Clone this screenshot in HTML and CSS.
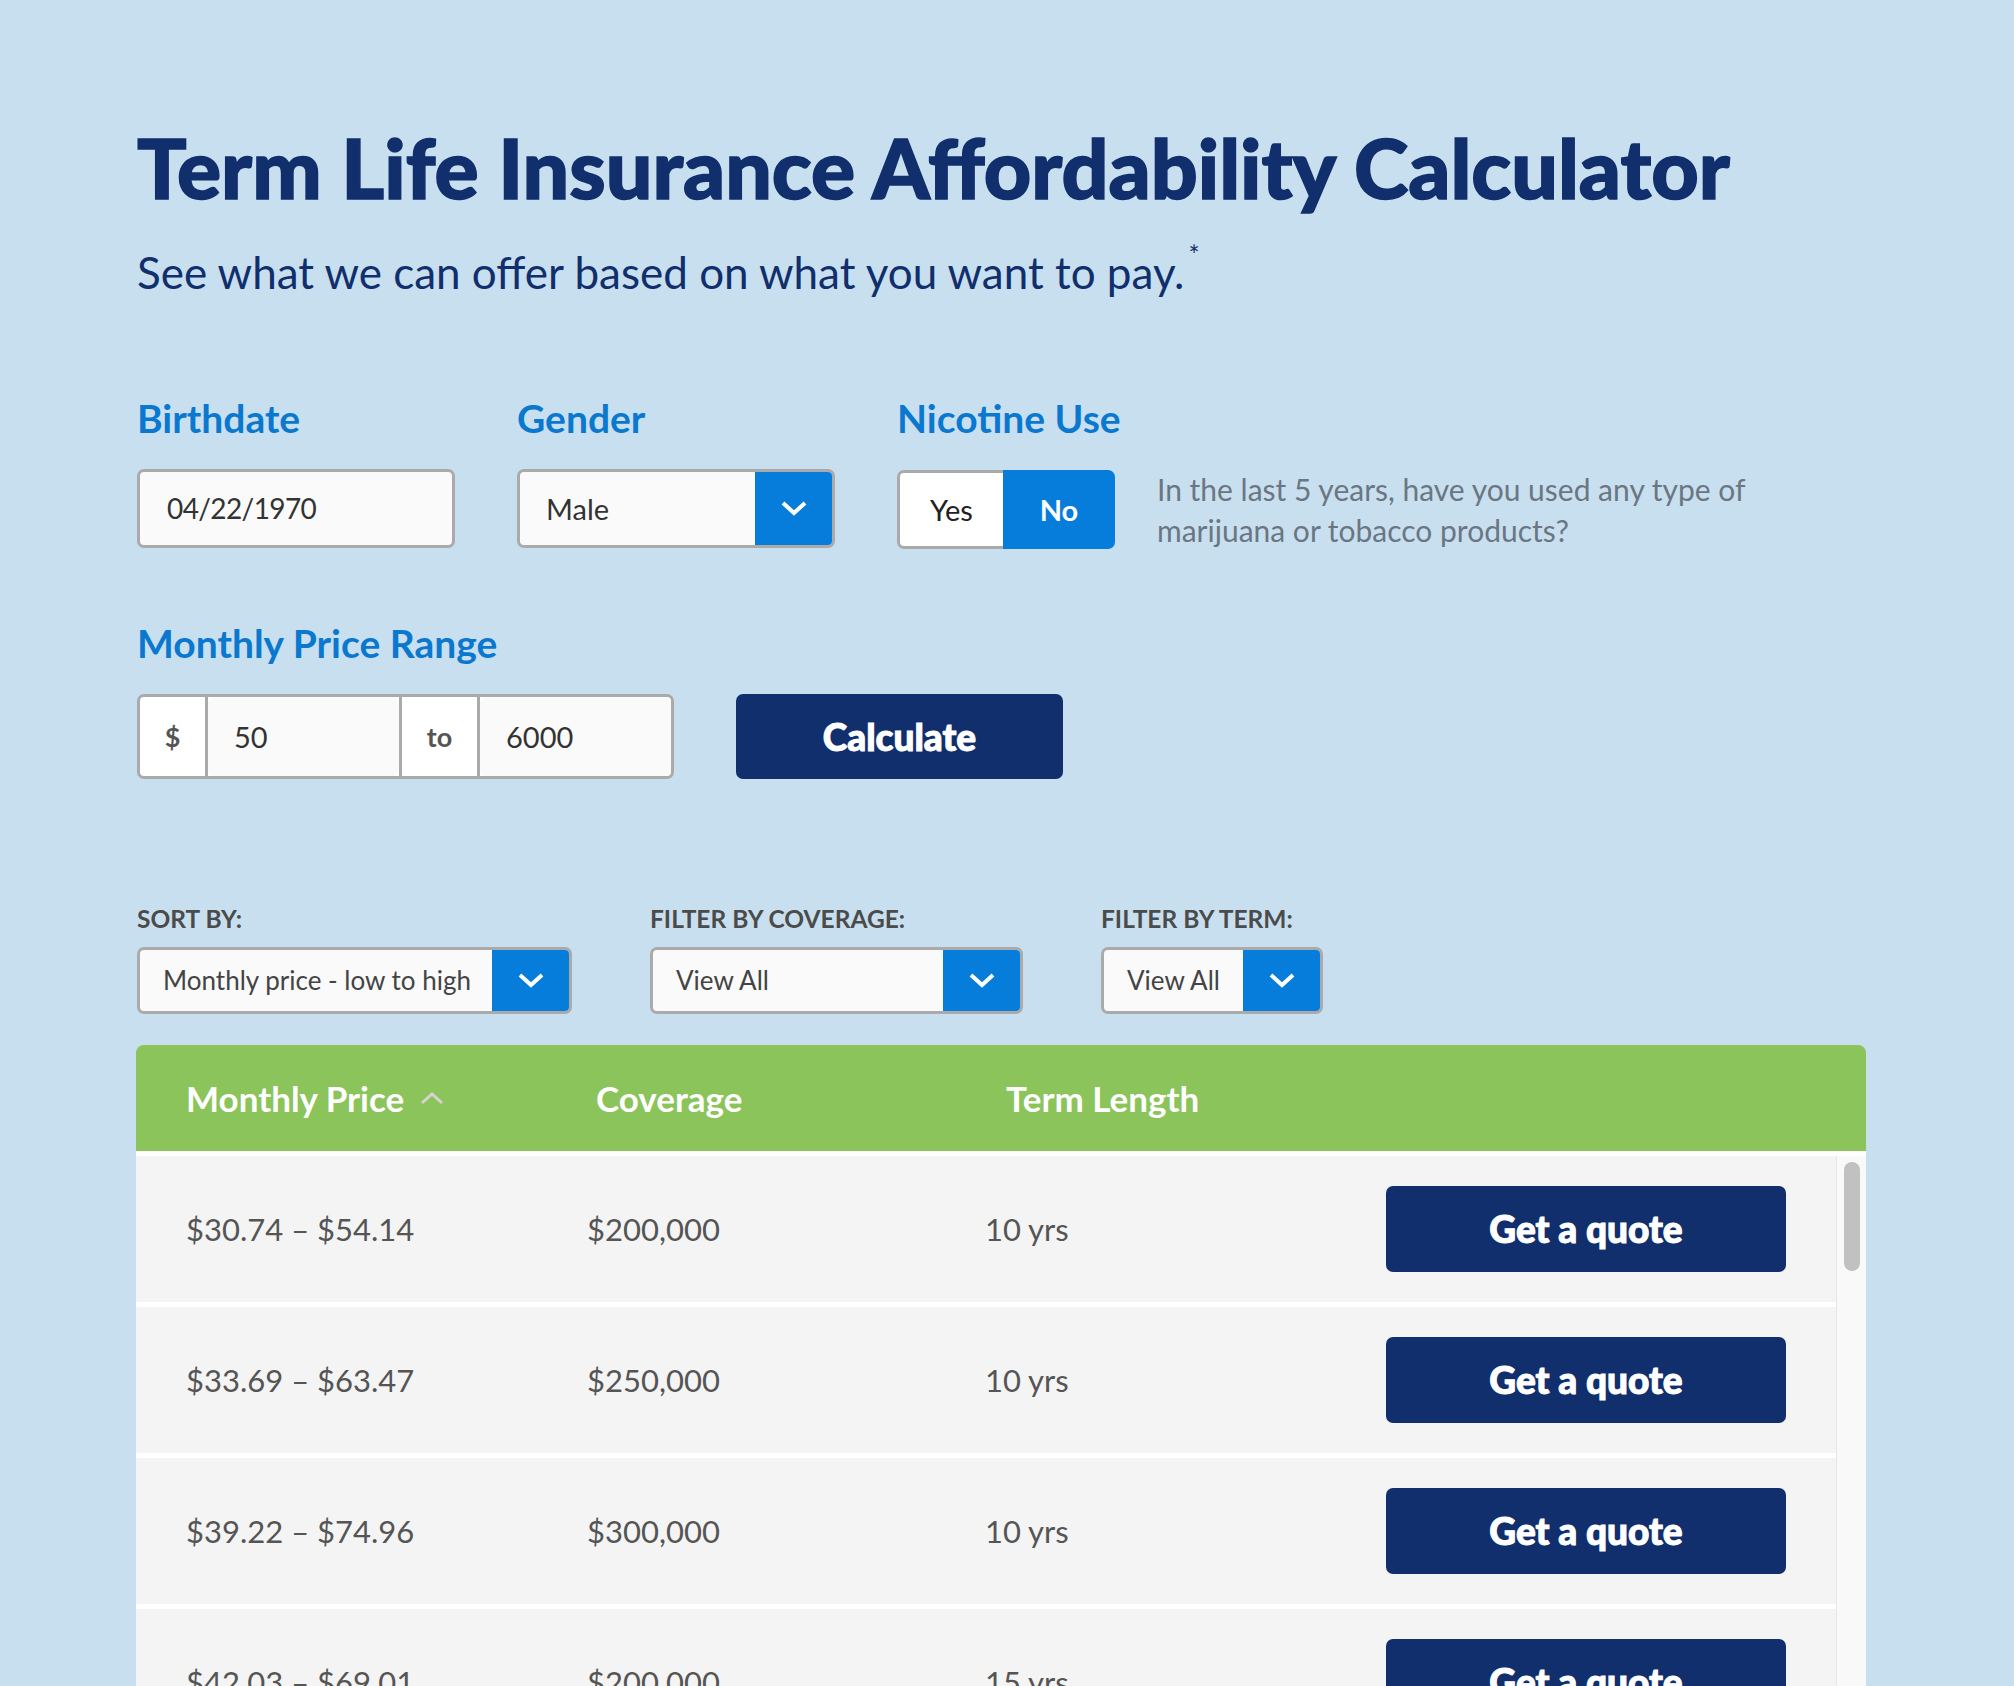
FILE: index.html
```html
<!DOCTYPE html>
<html lang="en">
  <head>
    <meta charset="UTF-8" />
    <meta name="viewport" content="width=device-width, initial-scale=1.0" />
    <title>Term Life Insurance Affordability Calculator</title>
    <link rel="stylesheet" href="styles.css">
  </head>
  <body>
    <main class="page">
      <h1 class="title">Term Life Insurance Affordability Calculator</h1>
      <p class="subtitle">See what we can offer based on what you want to pay.<sup>*</sup></p>

      <div class="fields">
        <div class="field">
          <label class="field-label">Birthdate</label>
          <div class="text-box">04/22/1970</div>
        </div>
        <div class="field">
          <label class="field-label">Gender</label>
          <div class="select-box">
            <span class="select-value">Male</span>
            <span class="select-arrow">
              <svg width="28" height="16" viewBox="0 0 28 16"><polyline points="3,3 14,13 25,3" fill="none" stroke="#fff" stroke-width="4" /></svg>
            </span>
          </div>
        </div>
        <div class="field">
          <label class="field-label">Nicotine Use</label>
          <div class="nicotine-row">
            <div class="toggle">
              <span class="toggle-yes">Yes</span>
              <span class="toggle-no">No</span>
            </div>
            <p class="help">In the last 5 years, have you used any type of marijuana or tobacco products?</p>
          </div>
        </div>
      </div>

      <div class="range-section">
        <label class="field-label">Monthly Price Range</label>
        <div class="range-row">
          <div class="range">
            <span class="range-addon range-dollar">$</span>
            <span class="range-input">50</span>
            <span class="range-addon range-to">to</span>
            <span class="range-input">6000</span>
          </div>
          <button class="btn btn-calc">Calculate</button>
        </div>
      </div>

      <div class="filters">
        <div class="filter filter-sort">
          <span class="filter-label">SORT BY:</span>
          <div class="select-box select-small">
            <span class="select-value">Monthly price - low to high</span>
            <span class="select-arrow">
              <svg width="28" height="16" viewBox="0 0 28 16"><polyline points="3,3 14,13 25,3" fill="none" stroke="#fff" stroke-width="4" /></svg>
            </span>
          </div>
        </div>
        <div class="filter filter-coverage">
          <span class="filter-label">FILTER BY COVERAGE:</span>
          <div class="select-box select-small">
            <span class="select-value">View All</span>
            <span class="select-arrow">
              <svg width="28" height="16" viewBox="0 0 28 16"><polyline points="3,3 14,13 25,3" fill="none" stroke="#fff" stroke-width="4" /></svg>
            </span>
          </div>
        </div>
        <div class="filter filter-term">
          <span class="filter-label">FILTER BY TERM:</span>
          <div class="select-box select-small">
            <span class="select-value">View All</span>
            <span class="select-arrow">
              <svg width="28" height="16" viewBox="0 0 28 16"><polyline points="3,3 14,13 25,3" fill="none" stroke="#fff" stroke-width="4" /></svg>
            </span>
          </div>
        </div>
      </div>

      <div class="results">
        <div class="results-head">
          <span class="head-cell">Monthly Price
            <svg class="sort-icon" width="24" height="14" viewBox="0 0 24 14"><polyline points="2,12 12,3 22,12" fill="none" stroke="#d4d4d4" stroke-width="3" /></svg>
          </span>
          <span class="head-cell">Coverage</span>
          <span class="head-cell">Term Length</span>
        </div>
        <div class="results-body">
          <div class="rows">
            <div class="row">
              <span class="cell">$30.74 – $54.14</span>
              <span class="cell">$200,000</span>
              <span class="cell">10 yrs</span>
              <button class="btn btn-quote">Get a quote</button>
            </div>
            <div class="row">
              <span class="cell">$33.69 – $63.47</span>
              <span class="cell">$250,000</span>
              <span class="cell">10 yrs</span>
              <button class="btn btn-quote">Get a quote</button>
            </div>
            <div class="row">
              <span class="cell">$39.22 – $74.96</span>
              <span class="cell">$300,000</span>
              <span class="cell">10 yrs</span>
              <button class="btn btn-quote">Get a quote</button>
            </div>
            <div class="row">
              <span class="cell">$42.03 – $69.01</span>
              <span class="cell">$200,000</span>
              <span class="cell">15 yrs</span>
              <button class="btn btn-quote">Get a quote</button>
            </div>
          </div>
          <div class="scrollbar"><div class="thumb"></div></div>
        </div>
      </div>
    </main>
  </body>
</html>
```

FILE: styles.css
```css
* {
  padding: 0;
  margin: 0;
  box-sizing: border-box;
}

html,
body {
  height: 100%;
  overflow: hidden;
}

body {
  font-family: Lato, "Liberation Sans", sans-serif;
  background-color: #c8dfef;
  color: #333;
}

.page {
  padding: 130px 148px 0 137px;
}

.title {
  font-size: 82.4px;
  line-height: 76px;
  font-weight: 900;
  color: #112f6d;
  -webkit-text-stroke: 1.5px #112f6d;
}

.subtitle {
  margin-top: 31px;
  font-size: 44px;
  line-height: 52px;
  color: #112f6d;
}

.subtitle sup {
  font-size: 26px;
  position: relative;
  top: -8px;
  left: 4px;
}

.fields {
  display: flex;
  gap: 62px;
  margin-top: 98px;
}

.field-label {
  display: block;
  font-size: 39px;
  line-height: 44px;
  font-weight: 700;
  color: #0b78d0;
  margin-bottom: 29px;
}

.text-box {
  width: 318px;
  height: 79px;
  border: 3px solid #aaa;
  border-radius: 7px;
  background: #fafafa;
  padding-left: 27px;
  font-size: 28px;
  letter-spacing: -0.6px;
  line-height: 73px;
  color: #333;
}

.select-box {
  display: flex;
  width: 318px;
  height: 79px;
  border: 3px solid #aaa;
  border-radius: 7px;
  background: #fafafa;
  overflow: hidden;
}

.select-value {
  flex: 1;
  padding-left: 26px;
  font-size: 29px;
  line-height: 73px;
  color: #333;
  white-space: nowrap;
}

.select-arrow {
  width: 77px;
  background: #067ddb;
  display: flex;
  align-items: center;
  justify-content: center;
}

.nicotine-row {
  display: flex;
  align-items: center;
  gap: 42px;
}

.toggle {
  display: flex;
  height: 79px;
}

.toggle-yes {
  width: 106px;
  border: 3px solid #aaa;
  border-right: 0;
  border-radius: 7px 0 0 7px;
  background: #fff;
  text-align: center;
  font-size: 29px;
  line-height: 73px;
  color: #222;
}

.toggle-no {
  width: 112px;
  border-radius: 0 7px 7px 0;
  background: #067ddb;
  text-align: center;
  font-size: 29px;
  line-height: 79px;
  font-weight: 700;
  color: #fff;
}

.help {
  width: 620px;
  font-size: 30px;
  line-height: 41px;
  color: #6b7683;
}

.range-section {
  margin-top: 70px;
}

.range-row {
  display: flex;
  gap: 62px;
}

.range {
  display: flex;
  width: 537px;
  height: 85px;
  border: 3px solid #aaa;
  border-radius: 7px;
  background: #fff;
}

.range-addon {
  text-align: center;
  font-size: 27px;
  line-height: 79px;
  font-weight: 700;
  color: #555;
}

.range-dollar {
  width: 68px;
  border-right: 3px solid #aaa;
}

.range-to {
  width: 81px;
  border-left: 3px solid #aaa;
  border-right: 3px solid #aaa;
}

.range-input {
  flex: 1;
  background: #fafafa;
  border-radius: 7px;
  padding-left: 26px;
  font-size: 29px;
  line-height: 79px;
  color: #333;
}

.btn {
  border: 0;
  border-radius: 7px;
  background: #112f6d;
  color: #fff;
  font-family: inherit;
  font-weight: 900;
  -webkit-text-stroke: 1px #fff;
}

.btn-calc {
  width: 327px;
  height: 85px;
  font-size: 37px;
}

.filters {
  display: flex;
  margin-top: 126px;
}

.filter-label {
  display: block;
  font-size: 24.5px;
  line-height: 28px;
  font-weight: 700;
  color: #4b4b4b;
  margin-bottom: 14px;
}

.select-small {
  height: 67px;
}

.select-small .select-value {
  padding-left: 23px;
  font-size: 26px;
  line-height: 61px;
  color: #444;
}

.filter-sort {
  width: 513px;
}

.filter-sort .select-box {
  width: 435px;
}

.filter-coverage {
  width: 451px;
}

.filter-coverage .select-box {
  width: 373px;
}

.filter-term .select-box {
  width: 222px;
}

.results {
  margin-top: 31px;
  width: 1730px;
  margin-left: -1px;
}

.results-head {
  display: grid;
  grid-template-columns: 410px 410px 1fr;
  height: 106px;
  align-items: center;
  background: #8bc45a;
  border-radius: 8px 8px 0 0;
}

.head-cell {
  padding-left: 50px;
  font-size: 35px;
  font-weight: 700;
  color: #fff;
  display: flex;
  align-items: center;
  gap: 16px;
}

.results-body {
  display: flex;
  height: 540px;
  background: #fff;
  border-top: 5px solid #fff;
  overflow: hidden;
}

.rows {
  flex: 1;
}

.row {
  display: grid;
  grid-template-columns: 401px 398px 1fr 400px;
  align-items: center;
  height: 146px;
  margin-bottom: 5px;
  padding-right: 50px;
  background: #f4f4f4;
}

.cell {
  padding-left: 50px;
  font-size: 31px;
  color: #555;
}

.btn-quote {
  height: 86px;
  font-size: 37px;
}

.scrollbar {
  width: 30px;
  background: #f9f9f9;
  border-left: 1px solid #e6e6e6;
  padding: 6px 0 0 7px;
}

.thumb {
  width: 16px;
  height: 109px;
  border-radius: 8px;
  background: #c1c1c1;
}
```
